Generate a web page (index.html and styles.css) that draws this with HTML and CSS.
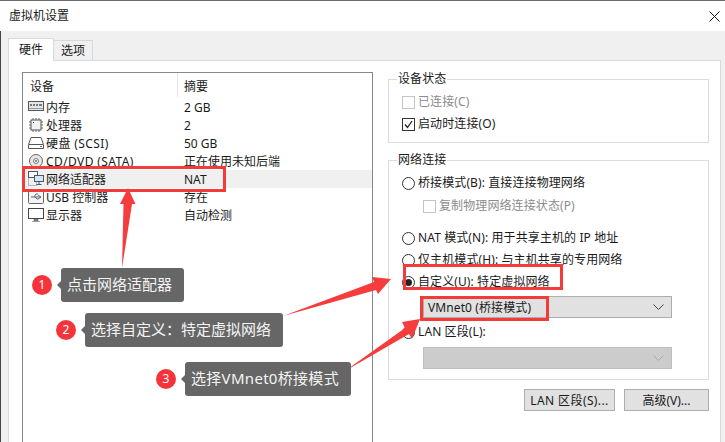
FILE: index.html
```html
<!DOCTYPE html>
<html lang="zh-CN">
<head>
    <meta charset="UTF-8">
    <title>虚拟机设置</title>
    <link rel="stylesheet" href="styles.css">
</head>
<body>
    <div class="window">
        <div class="titlebar">
            <span>虚拟机设置</span>
            <svg class="close" width="11" height="11" viewBox="0 0 11 11"><path d="M0.5 0.5L10.5 10.5M10.5 0.5L0.5 10.5" stroke="#111" fill="none"/></svg>
        </div>

        <div class="content">
            <div class="tabs">
                <div class="tab active">硬件</div>
                <div class="tab">选项</div>
            </div>

            <div class="panel">
                <div class="device-list">
                    <div class="list-head">
                        <div class="col-device">设备</div>
                        <div class="col-summary">摘要</div>
                    </div>
                    <div class="row">
                        <div class="col-device">
                            <svg class="icon" viewBox="0 0 16 16"><rect x="0.5" y="2.5" width="15" height="9" fill="#e4e7ea" stroke="#555"/><path d="M2 5h2v2H2zM5 5h2v2H5zM8 5h2v2H8zM11 5h3v2h-3z" fill="#777"/><path d="M1 9.500h14" stroke="#999"/></svg>
                            内存
                        </div>
                        <div class="col-summary">2 GB</div>
                    </div>
                    <div class="row">
                        <div class="col-device">
                            <svg class="icon" viewBox="0 0 16 16"><rect x="3" y="3" width="10" height="10" fill="#f2f2f2" stroke="#555"/><path d="M5 1v2M8 1v2M11 1v2M5 13v2M8 13v2M11 13v2M1 5h2M1 8h2M1 11h2M13 5h2M13 8h2M13 11h2" stroke="#666"/><path d="M5 5h1v1H5z" fill="#444"/></svg>
                            处理器
                        </div>
                        <div class="col-summary">2</div>
                    </div>
                    <div class="row">
                        <div class="col-device">
                            <svg class="icon" viewBox="0 0 16 16"><path d="M3 2.500h10l2.500 7v4H0.500v-4z" fill="#fff" stroke="#555"/><path d="M1 9.500h14" stroke="#555"/><path d="M12 11.500h2" stroke="#777"/></svg>
                            <span class="wide">硬盘 (SCSI)</span>
                        </div>
                        <div class="col-summary">50 GB</div>
                    </div>
                    <div class="row">
                        <div class="col-device">
                            <svg class="icon" viewBox="0 0 16 16"><circle cx="8" cy="8" r="6.500" fill="#e8e8e8" stroke="#666"/><circle cx="8" cy="8" r="2.500" fill="#fff" stroke="#777"/><circle cx="8" cy="8" r="1" fill="#666"/></svg>
                            <span class="wide">CD/DVD (SATA)</span>
                        </div>
                        <div class="col-summary">正在使用未知后端</div>
                    </div>
                    <div class="row selected">
                        <div class="col-device">
                            <svg class="icon" viewBox="0 0 16 16"><path d="M0.500 6.500v8h8v-3" fill="none" stroke="#6b7f99" stroke-dasharray="1 1"/><rect x="0.500" y="0.500" width="9" height="6" fill="#fff" stroke="#44586e"/><rect x="6.500" y="4.500" width="9" height="6" fill="#d5e6f5" stroke="#44586e"/><path d="M11 10.500v3M8.500 13.500h5" stroke="#44586e"/></svg>
                            网络适配器
                        </div>
                        <div class="col-summary">NAT</div>
                    </div>
                    <div class="row">
                        <div class="col-device">
                            <svg class="icon" viewBox="0 0 16 16"><rect x="0.500" y="1.500" width="15" height="13" rx="1" fill="#f4f4f4" stroke="#666"/><path d="M3 8h10M10 6l3 2-3 2M6 8l2-3h2M7 8l2 2h1" fill="none" stroke="#667"/></svg>
                            USB 控制器
                        </div>
                        <div class="col-summary">存在</div>
                    </div>
                    <div class="row">
                        <div class="col-device">
                            <svg class="icon" viewBox="0 0 16 16"><rect x="0.500" y="1.500" width="15" height="10" fill="#fff" stroke="#444"/><path d="M6 12h4v2H6zM4 14.500h8" fill="#888" stroke="#555" stroke-width="0.5"/></svg>
                            显示器
                        </div>
                        <div class="col-summary">自动检测</div>
                    </div>
                </div>

                <div class="side">
                    <fieldset class="group group-status">
                        <legend>设备状态</legend>
                        <div class="opt disabled"><span class="check"></span>已连接(C)</div>
                        <div class="opt">
                            <span class="check on">
                                <svg width="11" height="11" viewBox="0 0 11 11"><path d="M2 5.500L4.500 8.500L9 2" fill="none" stroke="#222" stroke-width="1.3"/></svg>
                            </span>启动时连接(O)
                        </div>
                    </fieldset>

                    <fieldset class="group group-net">
                        <legend>网络连接</legend>
                        <div class="opt"><span class="radio"></span>桥接模式(B): 直接连接物理网络</div>
                        <div class="opt disabled sub"><span class="check"></span>复制物理网络连接状态(P)</div>
                        <div class="opt opt-nat"><span class="radio"></span>NAT 模式(N): 用于共享主机的 IP 地址</div>
                        <div class="opt"><span class="radio"></span>仅主机模式(H): 与主机共享的专用网络</div>
                        <div class="opt"><span class="radio on"></span>自定义(U): 特定虚拟网络</div>
                        <div class="select">
                            VMnet0 (桥接模式)
                            <svg class="chev" width="11" height="6" viewBox="0 0 11 6"><path d="M0.500 0.500L5.500 5.500L10.500 0.500" fill="none" stroke="#444"/></svg>
                        </div>
                        <div class="opt"><span class="radio"></span>LAN 区段(L):</div>
                        <div class="select off">
                            <svg class="chev" width="11" height="6" viewBox="0 0 11 6"><path d="M0.500 0.500L5.500 5.500L10.500 0.500" fill="none" stroke="#a8a8a8"/></svg>
                        </div>
                    </fieldset>

                    <div class="buttons">
                        <div class="btn btn-lan">LAN 区段(S)...</div>
                        <div class="btn btn-adv">高级(V)...</div>
                    </div>
                </div>
            </div>
        </div>

        <!-- annotations drawn on top of the screenshot -->
        <svg class="arrows" width="725" height="442" viewBox="0 0 725 442">
            <path d="M128 188L135.500 204L132 204L122 268L123.500 204L120 204Z"/>
            <path d="M391 279L372 277L374 282L283 316L376 290L378 294Z"/>
            <path d="M420 319L402 322L405 328L345 371L409 334L412 339Z"/>
        </svg>
        <div class="mark mark-row"></div>
        <div class="mark mark-custom"></div>
        <div class="mark mark-vmnet"></div>

        <div class="step step-1"><span class="num">1</span><span class="tip">点击网络适配器</span></div>
        <div class="step step-2"><span class="num">2</span><span class="tip">选择自定义&#xFF1A;特定虚拟网络</span></div>
        <div class="step step-3"><span class="num">3</span><span class="tip tip-latin">选择VMnet0桥接模式</span></div>
    </div>
</body>
</html>
```

FILE: styles.css
```css
html, body {
    margin: 0;
    padding: 0;
}
body {
    width: 725px;
    height: 442px;
    overflow: hidden;
    font-family: "Noto Sans", "Noto Sans CJK SC", sans-serif;
    font-size: 12px;
    color: #1a1a1a;
    background: #fff;
}
.window {
    position: relative;
    width: 725px;
    height: 442px;
    overflow: hidden;
    display: flex;
    flex-direction: column;
    box-sizing: border-box;
    border-top: 1px solid #6b6b6b;
}
.titlebar {
    height: 30px;
    flex: none;
    display: flex;
    align-items: center;
    justify-content: space-between;
    padding: 0 5px 0 9px;
    background: #fff;
    line-height: 30px;
}
.content {
    flex: 1;
    display: flex;
    flex-direction: column;
    background: #f0f0f0;
    padding: 7px 4px 0 7px;
    border-left: 1px solid #444;
    min-height: 0;
}
.tabs {
    display: flex;
    align-items: flex-end;
    height: 22px;
    flex: none;
}
.tab {
    width: 38px;
    height: 19px;
    line-height: 20px;
    text-align: center;
    border: 1px solid #d9d9d9;
    border-bottom: none;
    border-left: none;
    background: #f0f0f0;
}
.tab.active {
    width: 44px;
    height: 22px;
    line-height: 21px;
    background: #fff;
    border-left: 1px solid #d9d9d9;
    position: relative;
    top: 1px;
}
.panel {
    flex: 1;
    display: flex;
    background: #fff;
    border: 1px solid #d9d9d9;
    border-bottom: none;
    padding: 11px 11px 0 13px;
    min-height: 0;
}
.device-list {
    width: 351px;
    height: 400px;
    flex: none;
    box-sizing: border-box;
    border: 1px solid #828790;
    border-bottom: none;
    background: #fff;
}
.list-head {
    display: flex;
    height: 25px;
    line-height: 28px;
}
.list-head .col-device {
    display: block;
    border-right: 1px solid #e5e5e5;
    padding-left: 7px;
    height: 24px;
    width: 147px;
}
.row {
    display: flex;
    height: 18px;
    line-height: 19px;
}
.col-device {
    flex: none;
    display: flex;
    align-items: center;
    white-space: nowrap;
    padding-left: 5px;
}
.row .col-device {
    width: 156px;
}
.col-summary {
    white-space: nowrap;
}
.list-head .col-summary {
    padding-left: 6px;
}
.row.selected {
    background: #f0f0f0;
}
.wide {
    letter-spacing: 0.4px;
}
.icon {
    width: 16px;
    height: 16px;
    margin-right: 2px;
    flex: none;
}
.side {
    flex: 1;
    display: flex;
    flex-direction: column;
    padding-left: 15px;
}
.group {
    margin: 0;
    border: 1px solid #dcdcdc;
    padding: 0 13px;
    min-width: 0;
    box-sizing: border-box;
    width: 321px;
    letter-spacing: 0.1px;
}
.group legend {
    margin-left: -5px;
    padding: 0 1px;
    line-height: 14px;
}
.group-status {
    height: 71px;
}
.group-net {
    height: 227px;
    margin-top: 10px;
}
.opt {
    display: flex;
    align-items: center;
    height: 18px;
    line-height: 18px;
    white-space: nowrap;
    margin-top: 4px;
}
.group-status .opt:first-of-type {
    margin-top: 7px;
}
.group-net .opt:first-of-type {
    margin-top: 7px;
}
.opt.disabled {
    color: #8c8c8c;
}
.opt.sub {
    margin-left: 21px;
    margin-top: 5px;
}
.opt-nat {
    margin-top: 14px;
}
.select + .opt {
    margin-top: 5px;
}
.check {
    width: 11px;
    height: 11px;
    border: 1px solid #c4c4c4;
    margin-right: 3px;
    background: #fff;
    display: flex;
    flex: none;
}
.check.on {
    border-color: #333;
}
.radio {
    width: 11px;
    height: 11px;
    border: 1px solid #333;
    border-radius: 50%;
    margin-right: 3px;
    background: #fff;
    flex: none;
    position: relative;
}
.radio.on::after {
    content: "";
    position: absolute;
    left: 2px;
    top: 2px;
    width: 7px;
    height: 7px;
    border-radius: 50%;
    background: #222;
}
.select {
    position: relative;
    display: flex;
    align-items: center;
    height: 22px;
    box-sizing: border-box;
    margin: 5px 23px 0 21px;
    padding-left: 4px;
    background: #e1e1e1;
    border: 1px solid #adadad;
    white-space: nowrap;
}
.select.off {
    background: #ccc;
    border-color: #bfbfbf;
    margin-top: 6px;
}
.chev {
    position: absolute;
    right: 7px;
    top: 7px;
}
.buttons {
    display: flex;
    justify-content: flex-end;
    gap: 9px;
    margin-top: 9px;
    width: 321px;
}
.btn {
    height: 22px;
    line-height: 21px;
    box-sizing: border-box;
    border: 1px solid #adadad;
    background: #e1e1e1;
    text-align: center;
}
.btn-lan {
    width: 91px;
    letter-spacing: 0.4px;
}
.btn-adv {
    width: 85px;
}
.arrows {
    position: absolute;
    left: 0;
    top: -1px;
}
.arrows path {
    fill: #f63c3c;
}
.mark {
    position: absolute;
    box-sizing: border-box;
    border: 3px solid #f53a3a;
}
.mark-row {
    left: 22px;
    top: 165px;
    width: 204px;
    height: 26px;
}
.mark-custom {
    left: 403px;
    top: 263px;
    width: 160px;
    height: 26px;
}
.mark-vmnet {
    left: 420px;
    top: 295px;
    width: 129px;
    height: 25px;
}
.step {
    position: absolute;
    display: flex;
    align-items: center;
    height: 34px;
}
.num {
    width: 20px;
    height: 20px;
    border-radius: 50%;
    background: #f5333a;
    color: #fff;
    font-size: 12px;
    line-height: 20px;
    text-align: center;
    margin-right: 9px;
    flex: none;
}
.tip {
    position: relative;
    height: 34px;
    line-height: 33px;
    padding: 0 12px 0 6px;
    border-radius: 3px;
    background: #666;
    color: #f4f4f4;
    font-size: 15px;
    white-space: nowrap;
}
.tip-latin {
    letter-spacing: 0.3px;
}
.tip::before {
    content: "";
    position: absolute;
    left: -4px;
    top: 13px;
    border-top: 4px solid transparent;
    border-bottom: 4px solid transparent;
    border-right: 4px solid #666;
}
.step-1 {
    left: 32px;
    top: 267px;
}
.step-2 {
    left: 56px;
    top: 312px;
}
.step-3 {
    left: 156px;
    top: 361px;
}
```
